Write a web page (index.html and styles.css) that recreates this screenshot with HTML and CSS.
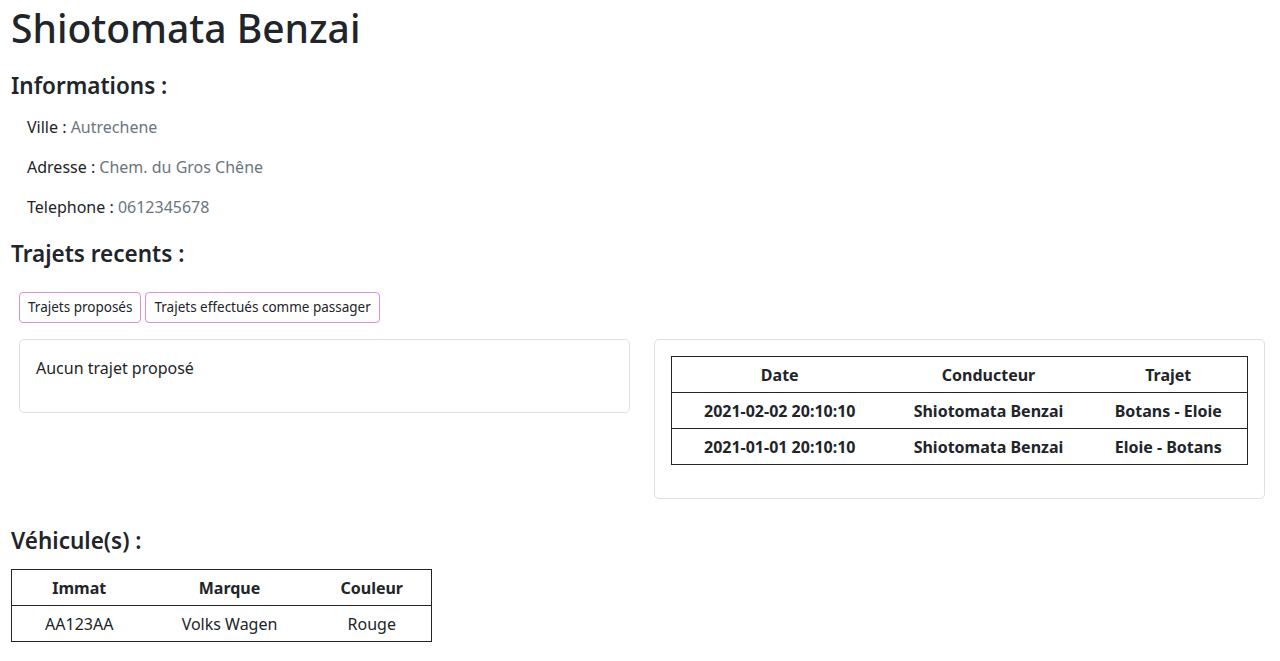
FILE: index.html
```html
<!DOCTYPE html>
<html lang="fr">
<head>
<meta charset="utf-8">
<title>Shiotomata Benzai</title>
<link rel="stylesheet" href="styles.css">
</head>
<body>
<div class="page">
  <h1 class="title">Shiotomata Benzai</h1>
  <h4 class="section">Informations :</h4>
  <div class="infos">
    <p>Ville : <span class="muted">Autrechene</span></p>
    <p>Adresse : <span class="muted">Chem. du Gros Chêne</span></p>
    <p>Telephone : <span class="muted">0612345678</span></p>
  </div>
  <h4 class="section trajets">Trajets recents :</h4>
  <div class="tabs">
    <button class="tab">Trajets proposés</button>
    <button class="tab">Trajets effectués comme passager</button>
  </div>
  <div class="cards">
    <div class="card">
      <p>Aucun trajet proposé</p>
    </div>
    <div class="card">
      <table class="grid trips">
        <colgroup><col class="c1"><col class="c2"><col class="c3"></colgroup>
        <thead><tr><th>Date</th><th>Conducteur</th><th>Trajet</th></tr></thead>
        <tbody>
          <tr><th>2021-02-02 20:10:10</th><th>Shiotomata Benzai</th><th>Botans - Eloie</th></tr>
          <tr><th>2021-01-01 20:10:10</th><th>Shiotomata Benzai</th><th>Eloie - Botans</th></tr>
        </tbody>
      </table>
    </div>
  </div>
  <h4 class="section vehic">Véhicule(s) :</h4>
  <table class="grid cars">
    <colgroup><col class="v1"><col class="v2"><col class="v3"></colgroup>
    <thead><tr><th>Immat</th><th>Marque</th><th>Couleur</th></tr></thead>
    <tbody><tr><td>AA123AA</td><td>Volks Wagen</td><td>Rouge</td></tr></tbody>
  </table>
</div>
</body>
</html>
```

FILE: styles.css
```css
* { box-sizing: border-box; }
html, body { margin: 0; padding: 0; background: #fff; }
body {
  font-family: "Noto Sans", "Open Sans", sans-serif;
  font-size: 16px;
  line-height: 1.5;
  color: #212529;
}
.page { padding: 0 12px 0 11px; }
.title {
  font-size: 39px;
  font-weight: 500;
  line-height: 1.2;
  margin: 5px 0 20px;
}
.section {
  font-size: 22.5px;
  font-weight: 600;
  line-height: 28px;
  margin: 0 0 15px;
}
.infos { padding-left: 16px; padding-bottom: 5px; }
.infos p { margin: 0 0 16px; }
.muted { color: #6c757d; }
.trajets { margin-bottom: 8px; }
.tabs { display: flex; gap: 4px; padding-left: 8px; margin: 24px 0 16px; }
.tab {
  font-family: inherit;
  font-size: 13.5px;
  line-height: 21px;
  color: #212529;
  background: #fff;
  border: 1px solid #dd8fdd;
  border-radius: 4px;
  padding: 4px 8px;
}
.cards {
  display: flex;
  gap: 24px;
  align-items: flex-start;
  margin: 0 3px 0 8px;
}
.card {
  flex: 1;
  border: 1px solid #dfdfdf;
  border-radius: 5px;
  padding: 16px;
}
.card p { margin: 0 0 16px; }
.grid {
  border-collapse: collapse;
  border: 1px solid #212529;
  text-align: center;
}
.grid th, .grid td { padding: 6px 8px 5px; line-height: 24px; }
.grid th { font-weight: 700; }
.grid tbody tr { border-top: 1px solid #212529; }
.trips { width: 100%; margin-bottom: 17px; }
.trips .c1 { width: 216px; }
.trips .c2 { width: 202px; }
.vehic { margin-top: 28px; margin-bottom: 14px; }
.cars { width: 421px; }
.cars .v1 { width: 135px; }
.cars .v2 { width: 166px; }
```
